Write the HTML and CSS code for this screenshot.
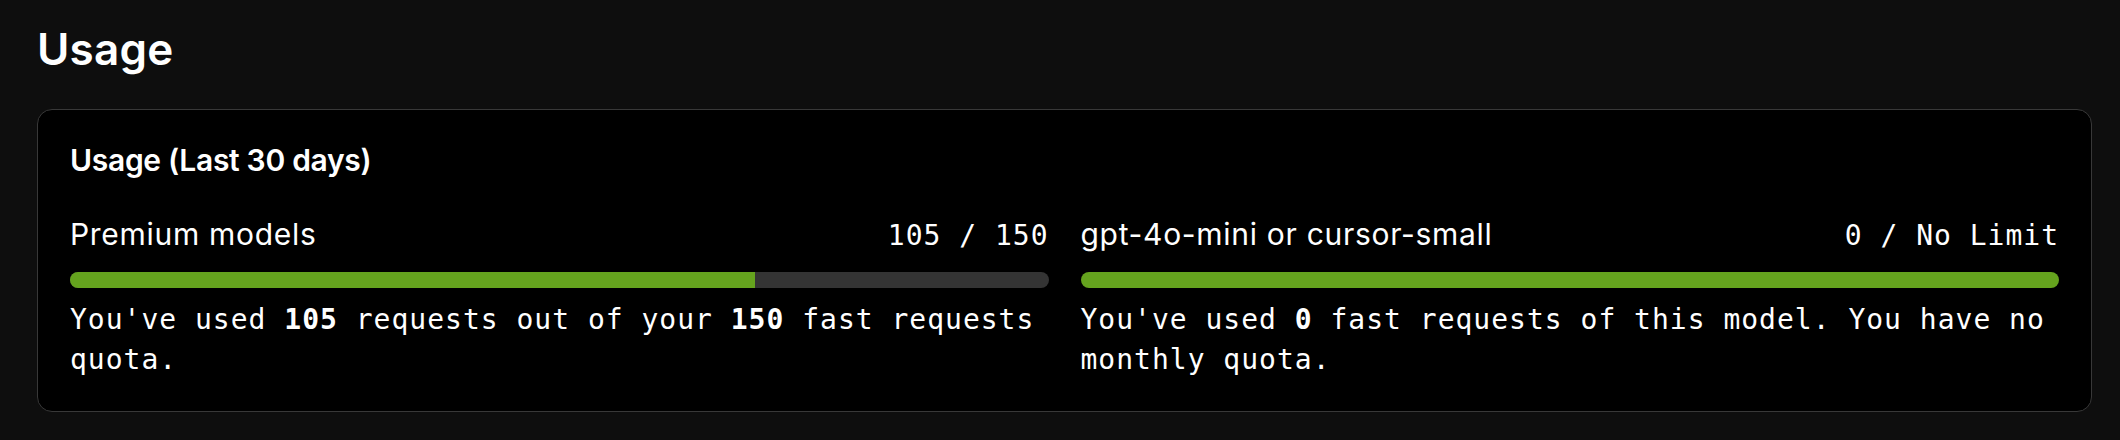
FILE: index.html
```html
<!DOCTYPE html>
<html lang="en">
    <head>
        <meta charset="utf-8" />
        <meta name="viewport" content="width=device-width, initial-scale=1" />
        <title>Usage</title>
        <link rel="stylesheet" href="styles.css">
    </head>
    <body>
        <div class="page">
            <h1 class="page-title">Usage</h1>

            <section class="card">
                <h2 class="card-title">Usage (Last 30 days)</h2>

                <div class="meters">
                    <div class="meter">
                        <div class="meter-head">
                            <span class="meter-name">Premium models</span>
                            <span class="meter-count">105 / 150</span>
                        </div>
                        <div class="bar">
                            <div class="bar-fill" style="width: 70%"></div>
                        </div>
                        <p class="meter-note">You've used <b>105</b> requests out of your <b>150</b> fast requests quota.</p>
                    </div>

                    <div class="meter">
                        <div class="meter-head">
                            <span class="meter-name">gpt-4o-mini or cursor-small</span>
                            <span class="meter-count">0 / No Limit</span>
                        </div>
                        <div class="bar">
                            <div class="bar-fill" style="width: 100%"></div>
                        </div>
                        <p class="meter-note">You've used <b>0</b> fast requests of this model. You have no monthly quota.</p>
                    </div>
                </div>
            </section>
        </div>
    </body>
</html>
```

FILE: styles.css
```css
body, html {
    margin: 0;
    padding: 0;
    height: 100%;
    overflow: hidden;
    background: #0e0e0e;
    color: #fff;
    font-family: Inter, "Noto Sans", sans-serif;
}

.page {
    padding: 23px 28px 0 37px;
}

.page-title {
    margin: 0 0 34px;
    font-size: 44px;
    line-height: 52px;
    font-weight: 600;
    letter-spacing: 0.2px;
}

.card {
    background: #000;
    border: 1px solid #383838;
    border-radius: 15px;
    padding: 32px 32px 31px;
}

.card-title {
    margin: 0 0 38px;
    font-size: 30px;
    line-height: 36px;
    font-weight: 600;
    letter-spacing: -0.3px;
}

.meters {
    display: grid;
    grid-template-columns: 1fr 1fr;
    gap: 32px;
}

.meter-head {
    display: flex;
    justify-content: space-between;
    align-items: baseline;
    line-height: 36px;
}

.meter-name {
    font-size: 30px;
    font-weight: 400;
    letter-spacing: 0.7px;
}

.meter-count,
.meter-note {
    font-family: "DejaVu Sans Mono", monospace;
    font-size: 28px;
    letter-spacing: 1px;
}

.bar {
    margin-top: 18px;
    height: 16px;
    border-radius: 8px;
    background: #343434;
    overflow: hidden;
}

.bar-fill {
    height: 100%;
    background: #65a31e;
}

.meter-note {
    margin: 12px 0 0;
    line-height: 40px;
}

.meter-note b {
    font-weight: 700;
}
```
